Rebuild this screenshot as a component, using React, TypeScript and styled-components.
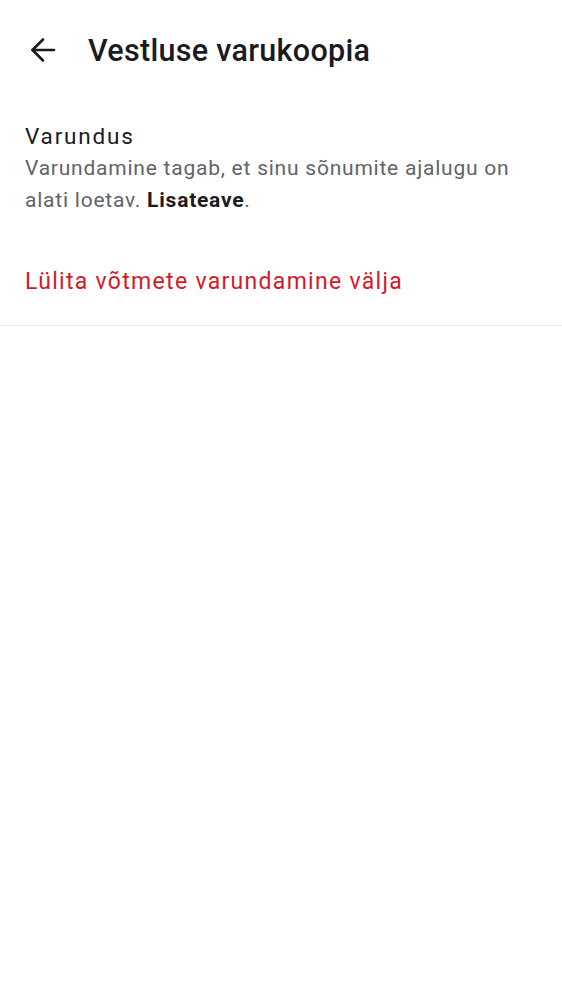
import React from "react";
import styled, { createGlobalStyle } from "styled-components";

const Global = createGlobalStyle`
  html, body { margin: 0; padding: 0; background: #ffffff; }
  body { font-family: Roboto, "Noto Sans", sans-serif; -webkit-font-smoothing: antialiased; }
`;

const Page = styled.div`
  width: 562px;
  min-height: 1000px;
  background: #ffffff;
  display: flex;
  flex-direction: column;
`;

const Toolbar = styled.header`
  height: 100px;
  display: flex;
  align-items: center;
  padding: 0 0 0 19px;
  gap: 21px;
  box-sizing: border-box;
`;

const BackButton = styled.button`
  width: 48px;
  height: 48px;
  border: none;
  background: transparent;
  padding: 0;
  display: flex;
  align-items: center;
  justify-content: center;
  color: #1b1b1f;
`;

const Title = styled.h1`
  margin: 0;
  font-size: 30.5px;
  font-weight: 500;
  color: #1b1b1f;
  letter-spacing: 0.3px;
`;

const Section = styled.section`
  padding: 20px 25px 22px 25px;
`;

const ItemTitle = styled.div`
  font-size: 22.5px;
  color: #1b1b1f;
  line-height: 32px;
  letter-spacing: 1.8px;
`;

const ItemText = styled.p`
  margin: 0;
  font-size: 21px;
  line-height: 32px;
  letter-spacing: 0.77px;
  color: #60646c;
  b { color: #1b1b1f; font-weight: 700; }
`;

const DangerRow = styled.div`
  padding: 0 25px;
  height: 88px;
  display: flex;
  align-items: center;
  font-size: 23px;
  letter-spacing: 1.3px;
  color: #d31a2b;
  border-bottom: 1px solid #e9e9ee;
  box-sizing: border-box;
`;

export default function App() {
  return (
    <>
      <Global />
      <Page>
        <Toolbar>
          <BackButton aria-label="Tagasi">
            <svg width="26" height="26" viewBox="0 0 26 26" fill="none" stroke="currentColor" strokeWidth="2.6" strokeLinecap="round" strokeLinejoin="round">
              <path d="M24 13H2.5" />
              <path d="M13 2.5L2.5 13L13 23.5" />
            </svg>
          </BackButton>
          <Title>Vestluse varukoopia</Title>
        </Toolbar>
        <Section>
          <ItemTitle>Varundus</ItemTitle>
          <ItemText>
            Varundamine tagab, et sinu sõnumite ajalugu on alati loetav. <b>Lisateave</b>.
          </ItemText>
        </Section>
        <DangerRow>Lülita võtmete varundamine välja</DangerRow>
      </Page>
    </>
  );
}
